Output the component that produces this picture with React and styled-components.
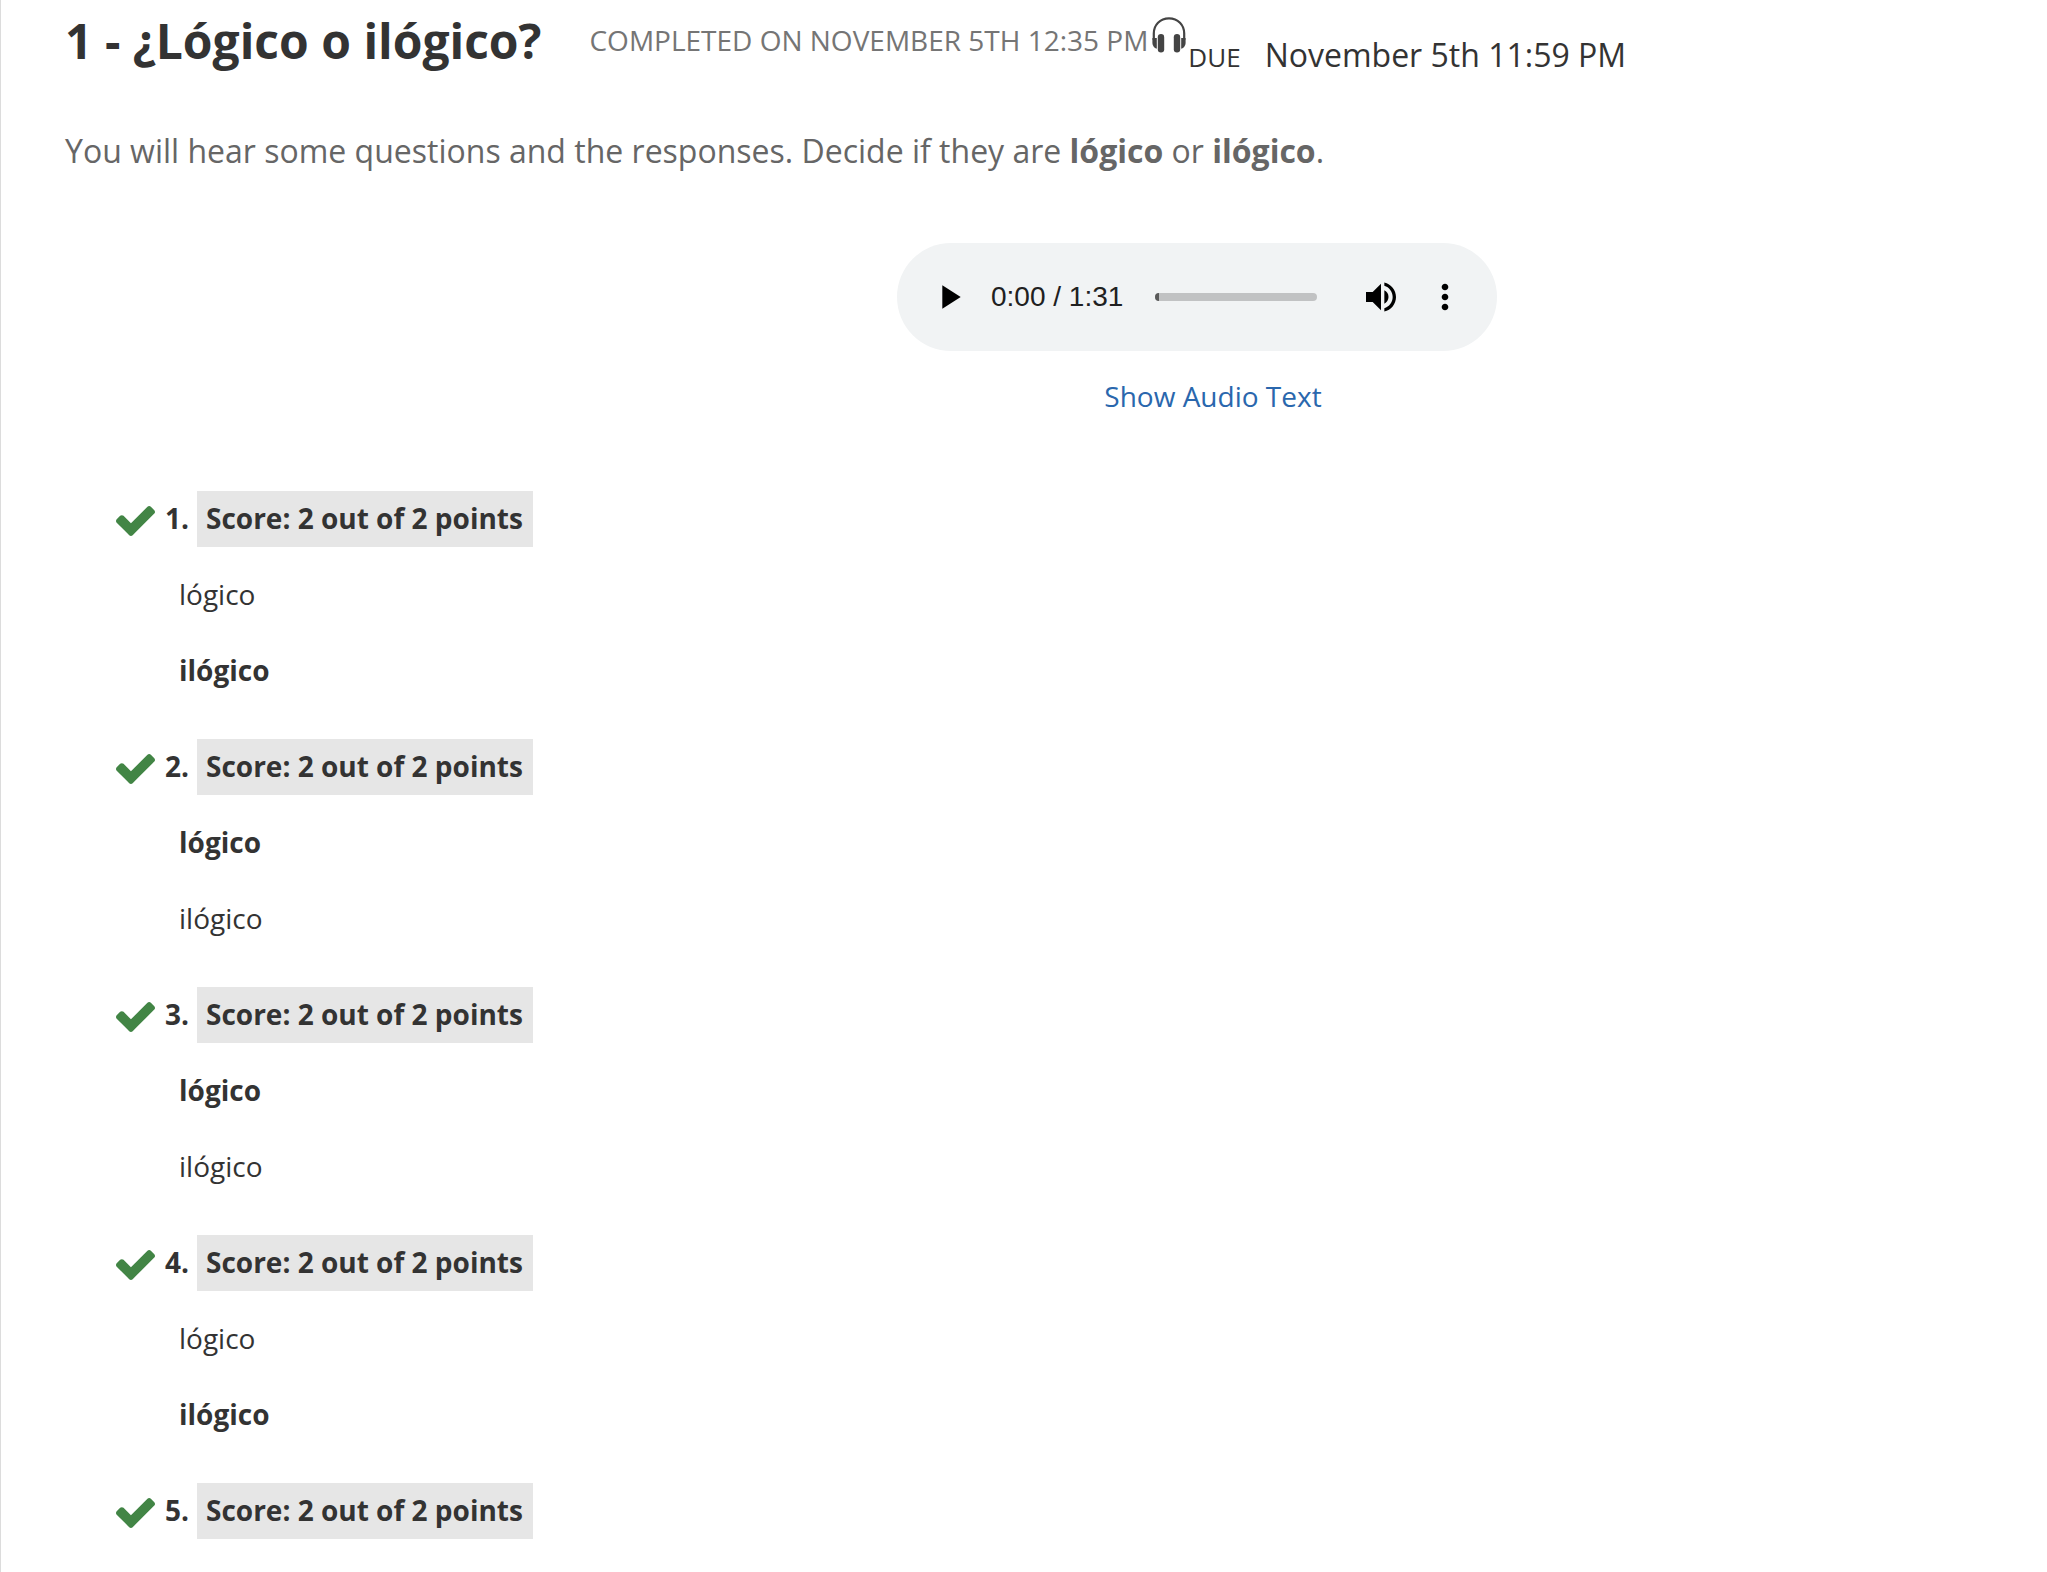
import React, { useState } from "react"
import styled, { createGlobalStyle } from "styled-components"
import { MdPlayArrow, MdVolumeUp, MdMoreVert } from "react-icons/md"

const questions = [
  { id: 1, answer: "ilógico" },
  { id: 2, answer: "lógico" },
  { id: 3, answer: "lógico" },
  { id: 4, answer: "ilógico" },
  { id: 5, answer: null },
]
const choices = ["lógico", "ilógico"]

const HeadphonesIcon = () => (
  <HeadphonesSvg viewBox="0 0 34 36" role="img" aria-label="Audio activity">
    <path
      d="M1.8 23V16.5C1.8 8 8 1.4 17 1.4S32.2 8 32.2 16.5V23"
      fill="none"
      stroke="currentColor"
      strokeWidth="2.2"
    />
    <rect x="5.8" y="17" width="6.4" height="18.4" rx="3.2" />
    <rect x="21.8" y="17" width="6.4" height="18.4" rx="3.2" />
    <path d="M0.4 21H4.8V31.8C2 31 0.4 28.5 0.4 26Z" />
    <path d="M33.6 21H29.2V31.8C32 31 33.6 28.5 33.6 26Z" />
  </HeadphonesSvg>
)

const CheckIcon = () => (
  <CheckSvg viewBox="121 334 1550 1188" role="img" aria-label="Correct">
    <path d="M1671 566q0 40-28 68l-724 724-136 136q-28 28-68 28t-68-28l-136-136-362-362q-28-28-28-68t28-68l136-136q28-28 68-28t68 28l294 295 656-657q28-28 68-28t68 28l136 136q28 28 28 68z" />
  </CheckSvg>
)

const AudioPlayer = () => {
  const [position, setPosition] = useState(0)

  return (
    <Player>
      <PlayerBtn type="button" aria-label="Play">
        <MdPlayArrow />
      </PlayerBtn>
      <PlayerTime>0:00 / 1:31</PlayerTime>
      <Timeline
        type="range"
        min="0"
        max="91"
        value={position}
        onChange={e => setPosition(Number(e.target.value))}
        aria-label="Audio position"
      />
      <PlayerBtn type="button" aria-label="Mute">
        <MdVolumeUp />
      </PlayerBtn>
      <PlayerBtn type="button" aria-label="More options">
        <MdMoreVert />
      </PlayerBtn>
    </Player>
  )
}

const App = () => {
  return (
    <>
      <GlobalStyle />
      <Page>
        <Header>
          <Title>1 - ¿Lógico o ilógico?</Title>
          <Completed>COMPLETED ON NOVEMBER 5TH 12:35 PM</Completed>
          <HeadphonesIcon />
          <DueLabel>DUE</DueLabel>
          <DueDate>November 5th 11:59 PM</DueDate>
        </Header>

        <Directions>
          You will hear some questions and the responses. Decide if they are{" "}
          <b>lógico</b> or <b>ilógico</b>.
        </Directions>

        <Media>
          <AudioPlayer />
          <TranscriptLink href="#audio-text">Show Audio Text</TranscriptLink>
        </Media>

        <QuestionList>
          {questions.map(question => (
            <Question key={`question ${question.id}`}>
              <QuestionHead>
                <CheckIcon />
                <QuestionNumber>{question.id}.</QuestionNumber>
                <Score>Score: 2 out of 2 points</Score>
              </QuestionHead>
              {question.answer && (
                <ChoiceList>
                  {choices.map(choice => (
                    <Choice key={choice} $selected={choice === question.answer}>
                      {choice}
                    </Choice>
                  ))}
                </ChoiceList>
              )}
            </Question>
          ))}
        </QuestionList>
      </Page>
    </>
  )
}

export default App

const GlobalStyle = createGlobalStyle`
  * {
    box-sizing: border-box;
  }
  body {
    margin: 0;
    background-color: #fff;
    color: #333;
    font-family: "Open Sans", "Noto Sans", sans-serif;
    font-size: 28px;
  }
`
const Page = styled.main`
  min-height: 100vh;
  padding: 8px 0 0 64px;
  border-left: 1px solid #dcdcdc;
`
const Header = styled.header`
  display: flex;
  align-items: flex-start;
`
const Title = styled.h1`
  margin: 0 48px 0 0;
  font-size: 48px;
  font-weight: 700;
  line-height: 66px;
`
const Completed = styled.span`
  color: #757575;
  line-height: 64px;
`
const HeadphonesSvg = styled.svg`
  width: 34px;
  height: 36px;
  margin: 9px 2px 0 4px;
  fill: currentColor;
  color: #444;
`
const DueLabel = styled.span`
  margin-right: 24px;
  font-size: 26px;
  line-height: 98px;
`
const DueDate = styled.span`
  font-size: 32px;
  line-height: 94px;
`
const Directions = styled.p`
  margin: 21px 0 0;
  color: #666;
  font-size: 32px;
  line-height: 48px;
`
const Media = styled.section`
  display: flex;
  flex-direction: column;
  align-items: center;
  padding-left: 282px;
  margin-top: 68px;
`
const Player = styled.div`
  display: flex;
  align-items: center;
  width: 600px;
  height: 108px;
  padding: 0 20px;
  border-radius: 54px;
  background-color: #f1f3f4;
`
const PlayerBtn = styled.button`
  display: flex;
  flex: none;
  align-items: center;
  justify-content: center;
  width: 64px;
  height: 64px;
  padding: 0;
  border: none;
  background: none;
  color: #000;
  font-size: 40px;
  cursor: pointer;
`
const PlayerTime = styled.span`
  flex: none;
  margin: 0 32px 0 10px;
  color: #202020;
  font-family: "Liberation Sans", Arial, sans-serif;
  line-height: 32px;
`
const Timeline = styled.input`
  appearance: none;
  flex: 1;
  min-width: 0;
  height: 8px;
  margin: 0 32px 0 0;
  border-radius: 4px;
  background-color: #c1c2c3;
  overflow: hidden;
  cursor: pointer;

  &::-webkit-slider-thumb {
    appearance: none;
    width: 4px;
    height: 8px;
    background-color: #5a5a5a;
  }
`
const TranscriptLink = styled.a`
  margin: 25px 0 0 32px;
  color: #2a67ad;
  line-height: 40px;
  text-decoration: none;
`
const QuestionList = styled.div`
  padding-left: 51px;
  margin-top: 75px;
`
const Question = styled.section`
  margin-bottom: 31px;
`
const QuestionHead = styled.div`
  display: flex;
  align-items: center;
`
const CheckSvg = styled.svg`
  width: 39px;
  height: 30px;
  margin: 4px 10px 0 0;
  fill: #428545;
`
const QuestionNumber = styled.span`
  width: 32px;
  padding-bottom: 2px;
  font-weight: 700;
  line-height: 54px;
`
const Score = styled.span`
  padding: 0 10px 2px 9px;
  background-color: #e6e6e6;
  font-weight: 700;
  line-height: 54px;
`
const ChoiceList = styled.ul`
  margin: 9px 0 0;
  padding: 0 0 0 63px;
  list-style: none;
`
const Choice = styled.li`
  font-weight: ${props => (props.$selected ? 700 : 400)};
  line-height: 76px;
`
